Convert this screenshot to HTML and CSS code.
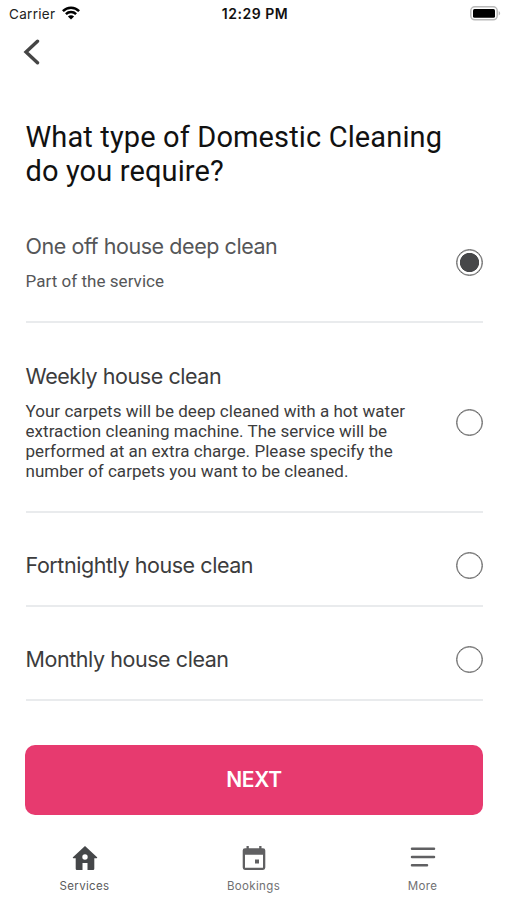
FILE: index.html
```html
<!DOCTYPE html>
<html lang="en">
<head>
<meta charset="utf-8">
<title>Domestic Cleaning</title>
<link rel="stylesheet" href="styles.css">
</head>
<body>
<div class="screen">
  <div class="status">
    <div class="carrier"><span>Carrier</span>
      <svg class="wifi" width="18" height="14" viewBox="0 0 18 14" fill="none" stroke="#000" stroke-width="2.5"><path d="M.9 5.1C5.4.5 12.6.5 17.1 5.1M3.9 8.1c2.8-2.8 7.4-2.8 10.2 0"/><path fill="#000" stroke="none" d="M5.9 10.5c1.7-1.6 4.5-1.6 6.2 0L9 13.6z"/></svg>
    </div>
    <div class="time">12:29 PM</div>
    <svg class="battery" width="31" height="15" viewBox="0 0 31 15"><rect x=".8" y=".8" width="26.4" height="13" rx="4" fill="#fff" stroke="#b9b9b9" stroke-width="1.5"/><rect x="3" y="3" width="22" height="8.8" rx="1.5"/><path d="M28.7 5.1c2 .8 2 3.6 0 4.4z" fill="#b9b9b9"/></svg>
  </div>
  <div class="header">
    <svg width="17" height="26" viewBox="0 0 17 26" fill="none" stroke="#454545" stroke-width="3.4" stroke-linecap="round"><path d="M14.5 2.2 3 13l11.5 10.8"/></svg>
  </div>
  <h1>What type of Domestic Cleaning<br>do you require?</h1>
  <div class="options">
    <div class="option selected">
      <div class="copy"><div class="name">One off house deep clean</div><p>Part of the service</p></div>
      <span class="radio"></span>
    </div>
    <div class="option">
      <div class="copy"><div class="name">Weekly house clean</div><p>Your carpets will be deep cleaned with a hot water<br>extraction cleaning machine. The service will be<br>performed at an extra charge. Please specify the<br>number of carpets you want to be cleaned.</p></div>
      <span class="radio"></span>
    </div>
    <div class="option short">
      <div class="name">Fortnightly house clean</div>
      <span class="radio"></span>
    </div>
    <div class="option short">
      <div class="name">Monthly house clean</div>
      <span class="radio"></span>
    </div>
  </div>
  <button class="next">NEXT</button>
  <nav class="tabs">
    <div class="tab active">
      <svg width="26" height="26" viewBox="0 0 26 26"><path fill="#454749" fill-rule="evenodd" d="M13 1 .9 12.2q-.5 1 .6 1H3.7v10.6q0 1.2 1.2 1.2h5.6v-7h5v7h5.6q1.2 0 1.2-1.2V13.2h2.2q1.1 0 .6-1zM13 9.3a2.7 2.7 0 1 0 0 5.4 2.7 2.7 0 0 0 0-5.4z"/></svg>
      <span>Services</span>
    </div>
    <div class="tab">
      <svg width="26" height="26" viewBox="0 0 26 26"><path fill="#606062" fill-rule="evenodd" d="M5.5 1h2.3v2.3h10.4V1h2.3v2.3h1.5q2.3 0 2.3 2.3v17q0 2.3-2.3 2.3H4q-2.3 0-2.3-2.3v-17q0-2.3 2.3-2.3h1.5zM4 9.7v13h18v-13zM14 14.6h4v4h-4z"/></svg>
      <span>Bookings</span>
    </div>
    <div class="tab">
      <svg width="26" height="26" viewBox="0 0 26 26" stroke="#606062" stroke-width="2.5" stroke-linecap="round"><path d="M2 3.7h22M2 12h22M2 20.2h15"/></svg>
      <span>More</span>
    </div>
  </nav>
</div>
</body>
</html>
```
FILE: styles.css
```css
* { box-sizing: border-box; }
body { margin: 0; background: #fff; }
.screen { width: 507px; height: 900px; display: flex; flex-direction: column; overflow: hidden; font-family: Roboto, sans-serif; }
.status { height: 28px; flex: none; display: grid; grid-template-columns: 1fr auto 1fr; align-items: center; padding: 0 6px 0 9px; font: 13.5px/28px Inter, sans-serif; color: #222; }
.carrier { display: flex; align-items: center; gap: 6px; letter-spacing: .3px; }
.wifi { margin: -2px 0 0 1px; }
.time { font-size: 14px; font-weight: 600; color: #111; letter-spacing: .5px; }
.battery { justify-self: end; margin-top: -2px; }
.header { height: 92px; flex: none; padding: 11px 0 0 23px; }
.header svg { display: block; }
h1 { margin: 0; padding: 0 25.5px; height: 73px; flex: none; font-weight: 400; font-size: 29px; line-height: 34px; letter-spacing: .13px; color: #111; white-space: nowrap; }
.options { margin: 0 24px 0 25.5px; }
.option { display: flex; justify-content: space-between; align-items: center; padding: 39px 0 30px; border-bottom: 2px solid #e9ebed; color: #3c3c3d; }
.selected { color: #555658; }
.short { padding-bottom: 26px; height: 94px; }
.name { font: 21.5px/28px Inter, sans-serif; letter-spacing: -.44px; white-space: nowrap; }
.short .name { margin-bottom: 2px; }
.option p { margin: 11px 0 0; font-size: 17px; line-height: 20px; letter-spacing: .04px; white-space: nowrap; }
.radio { width: 27px; height: 27px; flex: none; margin-top: 1px; border: 1.5px solid #666; border-radius: 50%; box-shadow: inset 0 0 0 .5px #888; }
.short .radio { margin: 0 0 1px; }
.selected .radio { background: radial-gradient(circle, #464749 9.2px, #fff 10px); }
.next { margin: 44px 24px 0 25px; height: 70px; flex: none; border: 0; border-radius: 10px; background: #e73a6f; color: #fff; font: 600 21px/70px Inter, sans-serif; letter-spacing: -.3px; padding: 0; }
.tabs { display: grid; grid-template-columns: repeat(3, 169px); margin-top: 30px; }
.tab { display: flex; flex-direction: column; align-items: center; gap: 7px; font: 11.5px/16px Inter, sans-serif; color: #707072; letter-spacing: .35px; }
.active { color: #5a5a5c; }
```
